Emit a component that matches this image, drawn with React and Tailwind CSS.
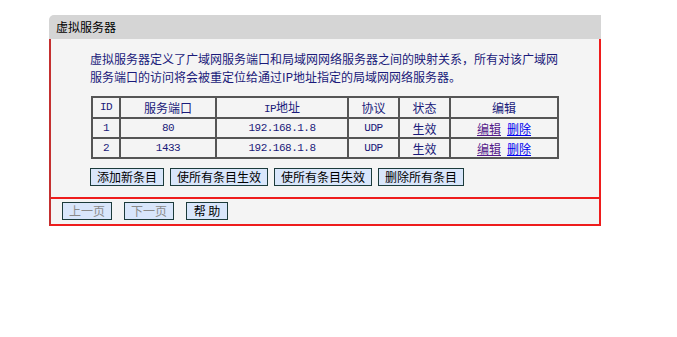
const rows = [
  { id: '1', port: '80', ip: '192.168.1.8', proto: 'UDP', status: '生效' },
  { id: '2', port: '1433', ip: '192.168.1.8', proto: 'UDP', status: '生效' },
];

const cjk = { fontFamily: '"Noto Sans CJK SC", "Liberation Sans", sans-serif' };

function Btn({ children, disabled, className = '' }) {
  return (
    <button
      className={`h-[18px] px-[6px] border border-[#1c3b3b] bg-[#d9e6fb] text-[12px] leading-[16px] whitespace-nowrap ${disabled ? 'text-[#8a8a8a]' : 'text-black'} ${className}`}
    >
      {children}
    </button>
  );
}

export default function App() {
  const cell = 'border-2 border-[#555] text-center p-0';
  const mono = 'font-["Liberation_Mono"] text-[11px] tracking-[-0.5px]';

  return (
    <div className="w-[677px] h-[337px] bg-white pt-[15px] pl-[49px]" style={cjk}>
      <div className="w-[552px]">
        <div className="h-[24px] bg-[#d5d5d5] rounded-tl-[5px] pl-[7px] flex items-center text-[12px] text-black">
          虚拟服务器
        </div>
        <div className="bg-[#f4f4f4] border-l-2 border-r-2 border-b-2 border-l-[#c43030] border-r-[#ee1c1c] border-b-[#ee1c1c]">
          <p className="pl-[39px] pr-[40px] pt-[11px] text-[12px] leading-[18px] text-[#1a1a7a]">
            虚拟服务器定义了广域网服务端口和局域网网络服务器之间的映射关系，所有对该广域网服务端口的访问将会被重定位给通过IP地址指定的局域网网络服务器。
          </p>
          <table className="ml-[40px] mt-[10px] w-[468px] border-collapse text-[12px] leading-[15px] text-[#1a1a7a]">
            <thead>
              <tr className="h-[21px]">
                <th className={`${cell} ${mono} font-normal w-[28px]`}>ID</th>
                <th className={`${cell} font-normal w-[96px]`}>服务端口</th>
                <th className={`${cell} font-normal w-[132px]`}>
                  <span className={mono}>IP</span>地址
                </th>
                <th className={`${cell} font-normal w-[51px]`}>协议</th>
                <th className={`${cell} font-normal w-[51px]`}>状态</th>
                <th className={`${cell} font-normal`}>编辑</th>
              </tr>
            </thead>
            <tbody>
              {rows.map((r) => (
                <tr key={r.id} className="h-[20px]">
                  <td className={`${cell} ${mono}`}>{r.id}</td>
                  <td className={`${cell} ${mono}`}>{r.port}</td>
                  <td className={`${cell} ${mono}`}>{r.ip}</td>
                  <td className={`${cell} ${mono}`}>{r.proto}</td>
                  <td className={cell}>{r.status}</td>
                  <td className={cell}>
                    <a href="#" className="underline text-[#551a8b]">编辑</a>
                    <a href="#" className="underline text-[#0000ee] ml-[6px]">删除</a>
                  </td>
                </tr>
              ))}
            </tbody>
          </table>
          <div className="flex gap-[6px] ml-[39px] mt-[9px] mb-[11px]">
            <Btn>添加新条目</Btn>
            <Btn>使所有条目生效</Btn>
            <Btn>使所有条目失效</Btn>
            <Btn>删除所有条目</Btn>
          </div>
          <div className="border-t-2 border-[#ee1c1c] flex gap-[12px] pl-[11px] pt-[3px] pb-[4px]">
            <Btn disabled className="w-[50px]">上一页</Btn>
            <Btn disabled className="w-[50px]">下一页</Btn>
            <Btn className="w-[42px]">帮 助</Btn>
          </div>
        </div>
      </div>
    </div>
  );
}
